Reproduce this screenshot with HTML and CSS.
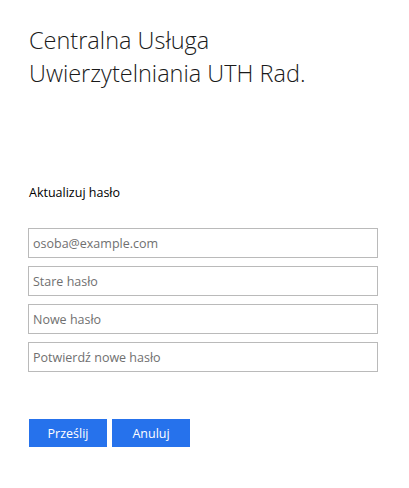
FILE: index.html
```html
<!DOCTYPE html>
<html lang="pl">
<head>
<meta charset="utf-8">
<title>Aktualizuj hasło</title>
<link rel="stylesheet" href="styles.css">
</head>
<body>
<div class="page">
  <h1 class="title">Centralna Usługa Uwierzytelniania UTH Rad.</h1>
  <h2 class="subtitle">Aktualizuj hasło</h2>
  <form class="form">
    <input class="field" type="text" placeholder="osoba@example.com">
    <input class="field" type="password" placeholder="Stare hasło">
    <input class="field" type="password" placeholder="Nowe hasło">
    <input class="field" type="password" placeholder="Potwierdź nowe hasło">
    <div class="actions">
      <button class="btn" type="button">Prześlij</button>
      <button class="btn" type="button">Anuluj</button>
    </div>
  </form>
</div>
</body>
</html>
```
FILE: styles.css
```css
html, body {
  margin: 0;
  padding: 0;
  background: #ffffff;
}
body {
  font-family: "Open Sans", "Noto Sans", sans-serif;
  color: #000;
}
.page {
  padding: 24px 31px 0 28px;
}
.title {
  margin: 0 0 0 1px;
  width: 300px;
  font-size: 23.5px;
  font-weight: 300;
  line-height: 33px;
  color: #1a1a1a;
}
.subtitle {
  margin: 94px 0 0 1px;
  font-size: 12.5px;
  font-weight: 400;
  line-height: 18px;
  color: #000;
}
.form {
  margin-top: 26px;
  display: flex;
  flex-direction: column;
  gap: 8px;
}
.field {
  box-sizing: border-box;
  width: 350px;
  height: 30px;
  margin: 0;
  padding: 0 4px;
  border: 1px solid #bababa;
  font-family: inherit;
  font-size: 12.5px;
  color: #000;
  background: #fff;
  outline: none;
}
.field::placeholder {
  color: #707070;
}
.actions {
  margin-top: 39px;
  margin-left: 1px;
  display: flex;
  gap: 5px;
}
.btn {
  width: 78px;
  height: 28px;
  border: none;
  padding: 0;
  background: #2672ec;
  color: #fff;
  font-family: inherit;
  font-size: 12.5px;
}
```
